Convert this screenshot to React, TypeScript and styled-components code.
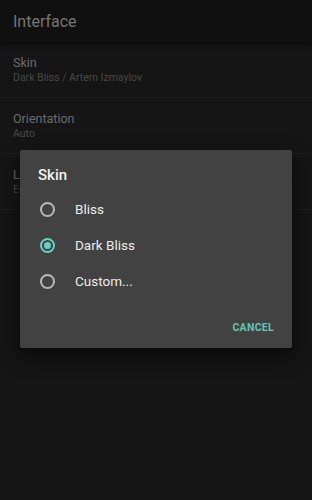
import React, { useState } from "react";
import styled, { createGlobalStyle } from "styled-components";

const GlobalStyle = createGlobalStyle`
  html, body {
    margin: 0;
    padding: 0;
    background: #151515;
    font-family: Roboto, "Noto Sans", sans-serif;
  }
`;

const Screen = styled.div`
  position: relative;
  width: 312px;
  height: 500px;
  background: #151515;
  overflow: hidden;
`;

const Toolbar = styled.div`
  height: 42px;
  display: flex;
  align-items: center;
  padding: 0 13px;
  background: #101010;
  box-shadow: 0 2px 4px rgba(0, 0, 0, 0.5);
  color: #767676;
  font-size: 16px;
`;

const List = styled.div`
  display: flex;
  flex-direction: column;
`;

const Row = styled.div`
  height: 56px;
  box-sizing: border-box;
  padding: 0 13px;
  display: flex;
  flex-direction: column;
  justify-content: center;
  border-bottom: 1px solid #1e1e1e;
`;

const RowTitle = styled.div`
  font-size: 12.5px;
  color: #6b6b6b;
  line-height: 16px;
`;

const RowSub = styled.div`
  font-size: 10.5px;
  color: #484848;
  line-height: 14px;
`;

const Dialog = styled.div`
  position: absolute;
  left: 20px;
  top: 150px;
  width: 272px;
  height: 198px;
  box-sizing: border-box;
  background: #424242;
  border-radius: 2px;
  box-shadow: 0 8px 20px rgba(0, 0, 0, 0.6);
  display: flex;
  flex-direction: column;
  padding: 15px 0 0;
`;

const DialogTitle = styled.div`
  padding: 0 18px;
  color: #f2f2f2;
  font-size: 15px;
  font-weight: 500;
  line-height: 20px;
`;

const Options = styled.div`
  display: flex;
  flex-direction: column;
  margin-top: 6px;
`;

const Option = styled.label`
  height: 36px;
  display: flex;
  align-items: center;
  padding: 0 20px;
  gap: 20px;
  color: #ececec;
  font-size: 13.5px;
  cursor: pointer;
`;

const Radio = styled.span<{ $on: boolean }>`
  width: 15px;
  height: 15px;
  box-sizing: border-box;
  border-radius: 50%;
  border: 2px solid ${(p) => (p.$on ? "#6ccfc4" : "#b8b8b8")};
  display: flex;
  align-items: center;
  justify-content: center;
  flex-shrink: 0;
  &::after {
    content: "";
    width: 7px;
    height: 7px;
    border-radius: 50%;
    background: ${(p) => (p.$on ? "#6ccfc4" : "transparent")};
  }
`;

const Actions = styled.div`
  margin-top: auto;
  display: flex;
  justify-content: flex-end;
  padding: 0 18px 14px;
`;

const TextButton = styled.button`
  background: none;
  border: none;
  padding: 0;
  color: #67c3b8;
  font-family: Roboto, sans-serif;
  font-size: 10.5px;
  font-weight: 700;
  letter-spacing: 0.3px;
  cursor: pointer;
`;

const items = [
  { title: "Skin", sub: "Dark Bliss / Artem Izmaylov" },
  { title: "Orientation", sub: "Auto" },
  { title: "Language", sub: "English" },
];

const skins = ["Bliss", "Dark Bliss", "Custom..."];

const App: React.FC = () => {
  const [skin, setSkin] = useState("Dark Bliss");

  return (
    <Screen>
      <GlobalStyle />
      <Toolbar>Interface</Toolbar>
      <List>
        {items.map((it) => (
          <Row key={it.title}>
            <RowTitle>{it.title}</RowTitle>
            <RowSub>{it.sub}</RowSub>
          </Row>
        ))}
      </List>
      <Dialog>
        <DialogTitle>Skin</DialogTitle>
        <Options>
          {skins.map((s) => (
            <Option key={s} onClick={() => setSkin(s)}>
              <Radio $on={skin === s} />
              {s}
            </Option>
          ))}
        </Options>
        <Actions>
          <TextButton>CANCEL</TextButton>
        </Actions>
      </Dialog>
    </Screen>
  );
};

export default App;
